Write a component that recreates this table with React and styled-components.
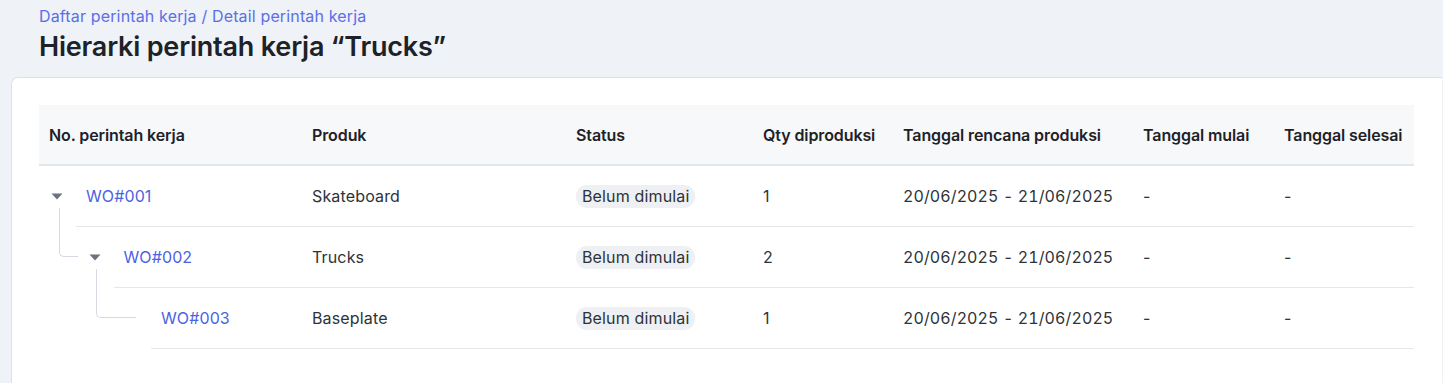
import React from "react";
import styled, { createGlobalStyle } from "styled-components";

const GlobalStyle = createGlobalStyle`
  html, body {
    margin: 0;
    padding: 0;
    background: #eff2f7;
    font-family: Inter, "Noto Sans", sans-serif;
  }
`;

const columns = "263px 264px 187px 140px 240px 141px 140px";

const rows = [
  { id: "WO#001", level: 0, caret: true, product: "Skateboard", qty: 1 },
  { id: "WO#002", level: 1, caret: true, product: "Trucks", qty: 2, elbow: 19 },
  { id: "WO#003", level: 2, caret: false, product: "Baseplate", qty: 1, elbow: 40 },
];

const headers = [
  "No. perintah kerja",
  "Produk",
  "Status",
  "Qty diproduksi",
  "Tanggal rencana produksi",
  "Tanggal mulai",
  "Tanggal selesai",
];

export default function App() {
  return (
    <Page>
      <GlobalStyle />
      <PageHead>
        <Breadcrumb>Daftar perintah kerja / Detail perintah kerja</Breadcrumb>
        <Title>Hierarki perintah kerja “Trucks”</Title>
      </PageHead>
      <Card>
        <Table>
          <HeadRow>
            {headers.map((h) => (
              <HeadCell key={h}>{h}</HeadCell>
            ))}
          </HeadRow>
          {rows.map((r) => {
            const indent = 37 + r.level * 37.5;
            return (
              <Row key={r.id}>
                <Indent $w={indent}>
                  {r.elbow && <Elbow $left={indent - 55} $w={r.elbow} />}
                  {r.caret && (
                    <Caret viewBox="0 0 12 7">
                      <path d="M0.5 0.5h11L6 6.5z" fill="#6b7280" />
                    </Caret>
                  )}
                </Indent>
                <RowBody $first={263 - indent}>
                  <Cell>
                    <Link>{r.id}</Link>
                  </Cell>
                  <Cell>{r.product}</Cell>
                  <Cell>
                    <Badge>Belum dimulai</Badge>
                  </Cell>
                  <Cell>{r.qty}</Cell>
                  <Cell $num>20/06/2025 - 21/06/2025</Cell>
                  <Cell>-</Cell>
                  <Cell>-</Cell>
                </RowBody>
              </Row>
            );
          })}
        </Table>
      </Card>
    </Page>
  );
}

const Page = styled.div`
  display: flex;
  flex-direction: column;
  padding: 5px 1px 0 11px;
  min-height: 378px;
`;

const PageHead = styled.div`
  display: flex;
  flex-direction: column;
  padding-left: 28px;
  gap: 2px;
  margin-bottom: 12px;
`;

const Breadcrumb = styled.div`
  font-size: 16px;
  line-height: 22px;
  color: #5b6fe6;
  letter-spacing: 0.15px;
`;

const Title = styled.h1`
  margin: 0;
  font-size: 27px;
  line-height: 36px;
  font-weight: 600;
  color: #1d2228;
  letter-spacing: -0.2px;
`;

const Card = styled.div`
  flex: 1;
  background: #fff;
  border: 1px solid #dde1e7;
  border-right: none;
  border-bottom: none;
  border-radius: 7px 0 0 0;
  padding: 27px 27px 0 27px;
`;

const Table = styled.div`
  display: flex;
  flex-direction: column;
  width: 1375px;
`;

const HeadRow = styled.div`
  display: grid;
  grid-template-columns: ${columns};
  height: 59px;
  align-items: center;
  background: #f7f8fa;
  border-bottom: 2px solid #e3e6ea;
`;

const HeadCell = styled.div`
  padding-left: 10px;
  font-size: 16px;
  font-weight: 600;
  color: #1d2228;
  white-space: nowrap;
  letter-spacing: -0.1px;
`;

const Row = styled.div`
  display: flex;
  height: 61px;
`;

const Indent = styled.div`
  position: relative;
  flex: 0 0 ${(p) => p.$w}px;
  display: flex;
  align-items: center;
  justify-content: flex-end;
  padding-right: 13px;
  box-sizing: border-box;
`;

const Elbow = styled.div`
  position: absolute;
  left: ${(p) => p.$left}px;
  top: -19px;
  width: ${(p) => p.$w}px;
  height: 49px;
  border-left: 1.5px solid #d6dae0;
  border-bottom: 1.5px solid #d6dae0;
  border-bottom-left-radius: 5px;
  box-sizing: border-box;
`;

const Caret = styled.svg`
  width: 12px;
  height: 7px;
  display: block;
`;

const RowBody = styled.div`
  flex: 1;
  display: grid;
  grid-template-columns: ${(p) => p.$first}px 264px 187px 140px 240px 141px 140px;
  align-items: center;
  border-bottom: 1px solid #e3e6ea;
`;

const Cell = styled.div`
  padding-left: 10px;
  font-size: 16px;
  color: #2d3339;
  white-space: nowrap;
  letter-spacing: ${(p) => (p.$num ? "0.1px" : "0.15px")};
  font-variant-numeric: ${(p) => (p.$num ? "tabular-nums" : "normal")};
`;

const Link = styled.span`
  color: #4c62e3;
  letter-spacing: 0.1px;
`;

const Badge = styled.span`
  display: inline-block;
  background: #eef0f3;
  border-radius: 11px;
  padding: 1px 6px;
  line-height: 21px;
  font-size: 16px;
  color: #2d3339;
`;
